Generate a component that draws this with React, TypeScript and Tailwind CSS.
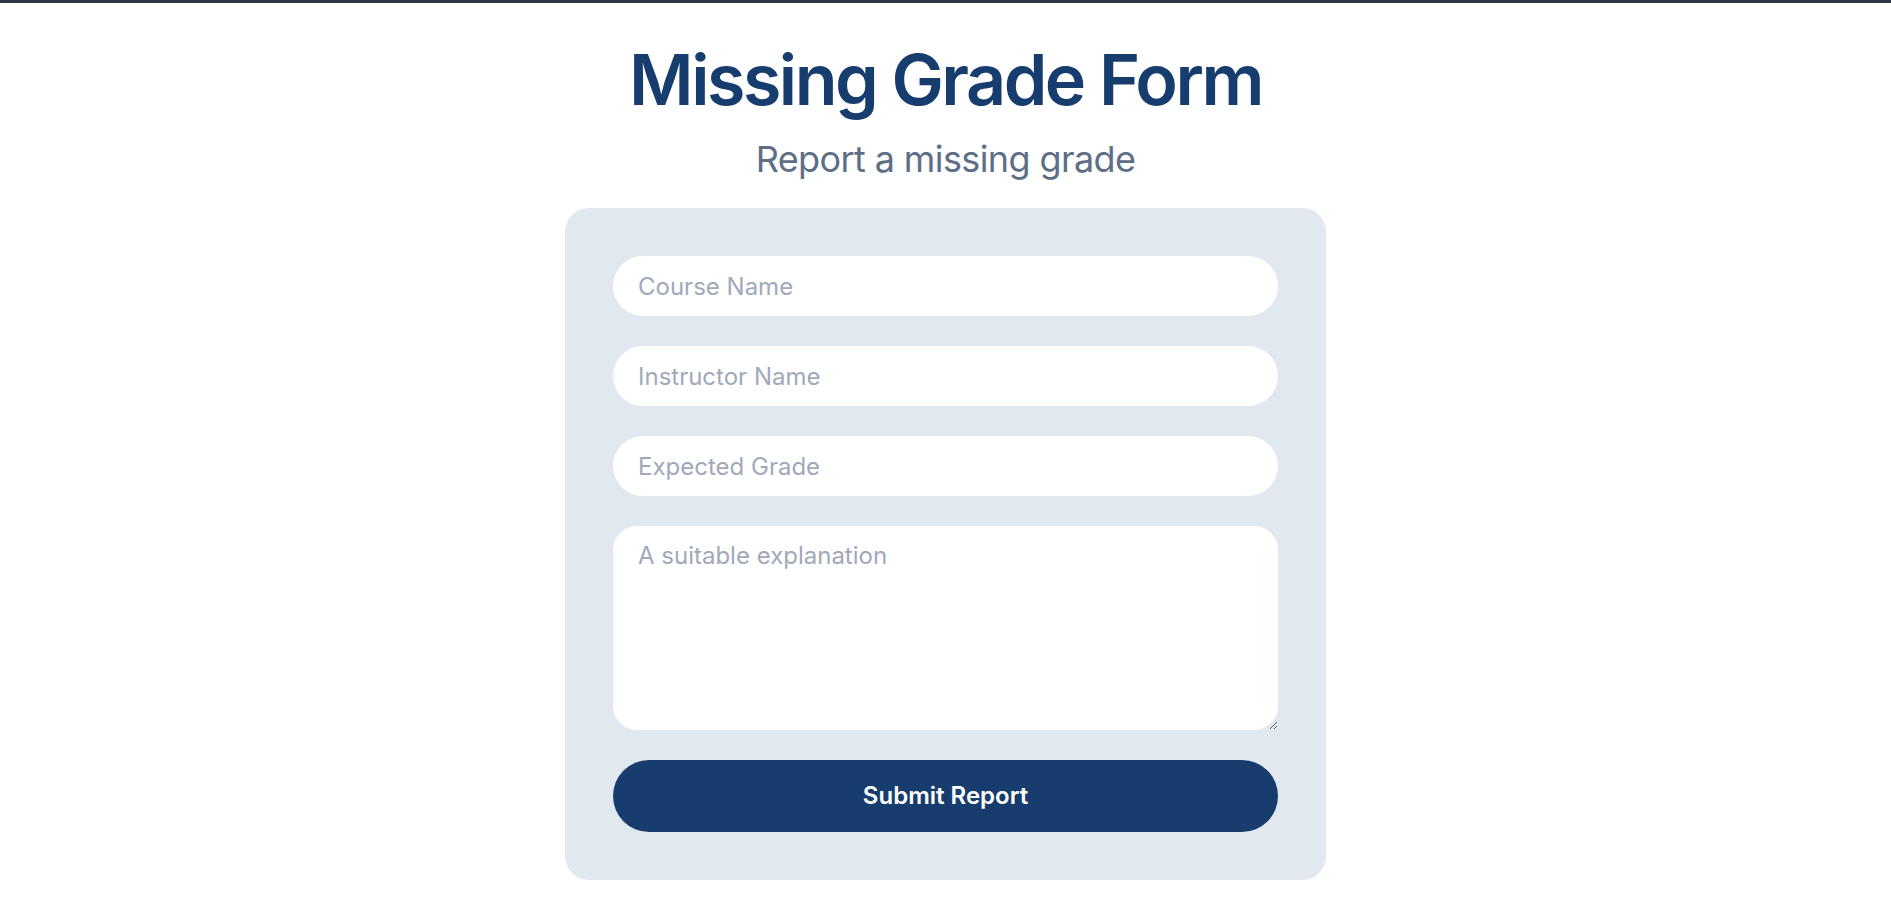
export default function App() {
  return (
    <div className="min-h-screen bg-white border-t-[3px] border-[#2d3748] font-['Inter',sans-serif]">
      <div className="flex flex-col items-center">
        <h1 className="mt-[42px] text-[70px] leading-none font-semibold tracking-[-2.5px] text-[#173d6e]">
          Missing Grade Form
        </h1>
        <p className="mt-[26px] text-[36px] leading-none text-[#5e6e86] tracking-[-0.6px]">Report a missing grade</p>

        <form className="mt-[31px] w-[761px] rounded-[24px] bg-[#e2e8f0] p-12 flex flex-col gap-[30px]">
          <input
            type="text"
            placeholder="Course Name"
            className="h-[60px] rounded-full bg-white px-[25px] text-[24px] text-[#2d3748] placeholder:text-[#a0a9ba] outline-none"
          />
          <input
            type="text"
            placeholder="Instructor Name"
            className="h-[60px] rounded-full bg-white px-[25px] text-[24px] text-[#2d3748] placeholder:text-[#a0a9ba] outline-none"
          />
          <input
            type="text"
            placeholder="Expected Grade"
            className="h-[60px] rounded-full bg-white px-[25px] text-[24px] text-[#2d3748] placeholder:text-[#a0a9ba] outline-none"
          />
          <textarea
            placeholder="A suitable explanation"
            className="h-[204px] rounded-[24px] bg-white px-[25px] pt-3 text-[24px] leading-[1.5] text-[#2d3748] placeholder:text-[#a0a9ba] outline-none"
          />
          <button
            type="button"
            className="h-[72px] rounded-full bg-[#173c6e] text-[24px] font-semibold text-white"
          >
            Submit Report
          </button>
        </form>
      </div>
    </div>
  );
}
